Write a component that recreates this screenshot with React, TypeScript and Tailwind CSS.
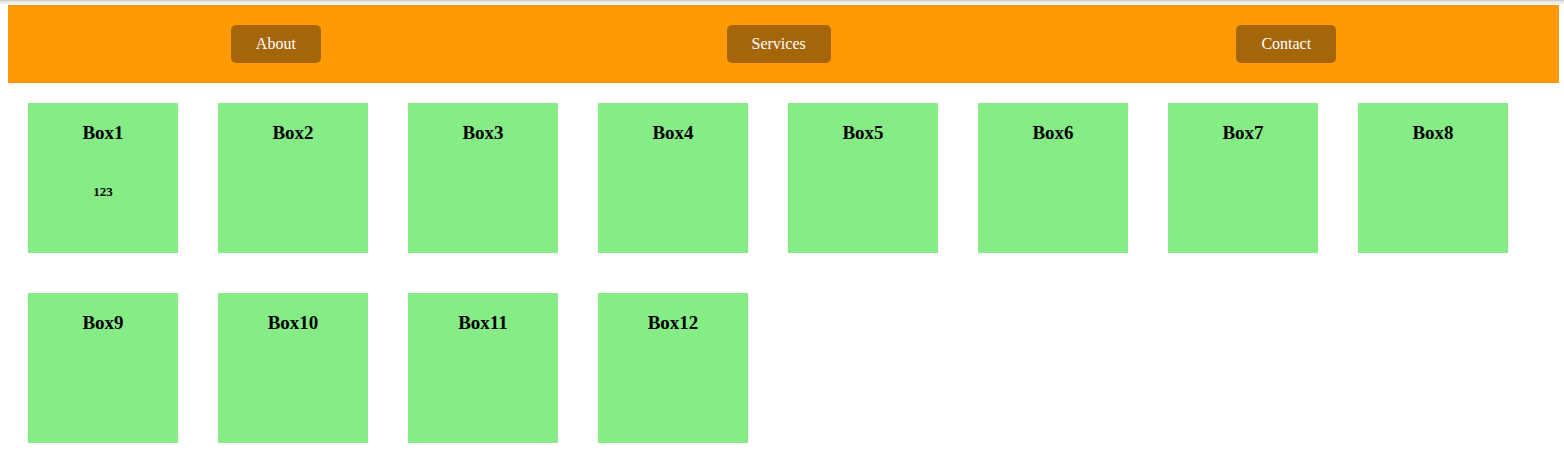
type Box = { title: string; note?: string };

const links = ["About", "Services", "Contact"];

const boxes: Box[] = Array.from({ length: 12 }, (_, i) => ({
  title: `Box${i + 1}`,
  note: i === 0 ? "123" : undefined,
}));

export default function App() {
  return (
    <div className="bg-white font-['Liberation_Serif',serif] text-black">
      <div className="h-[5px] border-t border-[#d0d0d0] bg-linear-to-b from-[#e0e0e0] to-white" />
      <header className="mr-[5px] ml-2 bg-[#ff9a06] p-5">
        <nav className="flex flex-wrap justify-around">
          {links.map((label) => (
            <a
              key={label}
              href={`#${label.toLowerCase()}`}
              className="rounded-[5px] bg-[#a5660a] px-[25px] py-2.5 text-[16px] leading-[18px] text-white"
            >
              {label}
            </a>
          ))}
        </nav>
      </header>
      <main className="flex flex-wrap gap-10 px-7 pt-5 pb-[22px]">
        {boxes.map(({ title, note }) => (
          <section key={title} className="size-[150px] bg-[#86ec86] pt-5 text-center font-bold">
            <h3 className="text-[19px] leading-5">{title}</h3>
            {note && <h5 className="mt-10 text-[13px] leading-[18px]">{note}</h5>}
          </section>
        ))}
      </main>
    </div>
  );
}
